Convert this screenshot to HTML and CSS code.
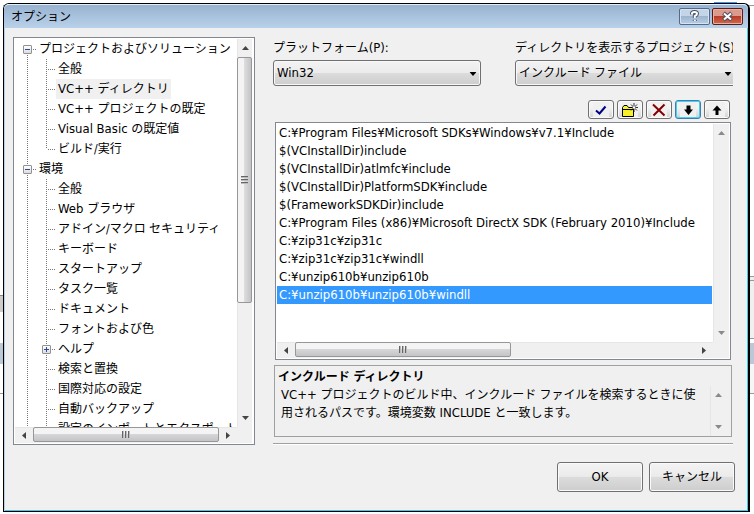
FILE: index.html
```html
<!DOCTYPE html>
<html lang="ja">
<head>
<meta charset="utf-8">
<title>オプション</title>
<link rel="stylesheet" href="styles.css">
</head>
<body>
<svg class="sprites" aria-hidden="true">
  <symbol id="up" viewBox="0 0 7 4"><path d="M0 4L3.5 0L7 4z"/></symbol>
  <symbol id="down" viewBox="0 0 7 4"><path d="M0 0L3.5 4L7 0z"/></symbol>
  <symbol id="left" viewBox="0 0 4 7"><path d="M4 0L0 3.5L4 7z"/></symbol>
  <symbol id="right" viewBox="0 0 4 7"><path d="M0 0L4 3.5L0 7z"/></symbol>
</svg>
<main class="dialog">
  <header class="titlebar">
    <h1>オプション</h1>
    <button class="caption" type="button" aria-label="ヘルプ"><svg width="13" height="13" viewBox="0 0 13 13"><path class="glyph-edge" d="M4 4.5V3.5Q4 2 6.5 2T9 3.8Q9 5 6.8 6.2V8M6.8 9.8V11"/><path class="glyph" d="M4 4.5V3.5Q4 2 6.5 2T9 3.8Q9 5 6.8 6.2V8M6.8 9.8V11"/></svg></button>
    <button class="caption close" type="button" aria-label="閉じる"><svg width="13" height="13" viewBox="0 0 13 13"><path class="glyph-edge" d="M2.5 3L10.5 10M10.5 3L2.5 10"/><path class="glyph" d="M3 3.5L10 9.5M10 3.5L3 9.5"/></svg></button>
  </header>

  <div class="content">
    <nav class="tree">
      <ul class="nodes">
        <li>
          <div class="row"><button class="toggle" type="button" aria-label="折りたたむ"></button><span class="label">プロジェクトおよびソリューション</span></div>
          <ul class="ended">
            <li class="row leaf"><span class="label">全般</span></li>
            <li class="row leaf"><span class="label current"><span lang="en">VC++ </span>ディレクトリ</span></li>
            <li class="row leaf"><span class="label"><span lang="en">VC++ </span>プロジェクトの既定</span></li>
            <li class="row leaf"><span class="label"><span lang="en">Visual Basic </span>の既定値</span></li>
            <li class="row leaf"><span class="label">ビルド/実行</span></li>
          </ul>
        </li>
        <li>
          <div class="row"><button class="toggle" type="button" aria-label="折りたたむ"></button><span class="label">環境</span></div>
          <ul>
            <li class="row leaf"><span class="label">全般</span></li>
            <li class="row leaf"><span class="label"><span lang="en">Web </span>ブラウザ</span></li>
            <li class="row leaf"><span class="label">アドイン/マクロ セキュリティ</span></li>
            <li class="row leaf"><span class="label">キーボード</span></li>
            <li class="row leaf"><span class="label">スタートアップ</span></li>
            <li class="row leaf"><span class="label">タスク一覧</span></li>
            <li class="row leaf"><span class="label">ドキュメント</span></li>
            <li class="row leaf"><span class="label">フォントおよび色</span></li>
            <li class="row"><button class="toggle plus" type="button" aria-label="展開する"></button><span class="label">ヘルプ</span></li>
            <li class="row leaf"><span class="label">検索と置換</span></li>
            <li class="row leaf"><span class="label">国際対応の設定</span></li>
            <li class="row leaf"><span class="label">自動バックアップ</span></li>
            <li class="row leaf"><span class="label">設定のインポートとエクスポート</span></li>
          </ul>
        </li>
      </ul>
      <div class="vbar" aria-hidden="true">
        <span class="arrow"><svg width="7" height="4"><use href="#up"/></svg></span>
        <span class="track"><span class="thumb tree-v"><i class="grip"></i></span></span>
        <span class="arrow"><svg width="7" height="4"><use href="#down"/></svg></span>
      </div>
      <div class="hbar" aria-hidden="true">
        <span class="arrow"><svg width="4" height="7"><use href="#left"/></svg></span>
        <span class="track"><span class="thumb full"><i class="grip"></i></span></span>
        <span class="arrow"><svg width="4" height="7"><use href="#right"/></svg></span>
      </div>
    </nav>

    <section class="page">
      <div class="fields">
        <div class="field platform">
          <label for="platform">プラットフォーム<span lang="en">(P):</span></label>
          <div class="combo"><select id="platform" lang="en"><option>Win32</option></select><svg width="8" height="4" viewBox="0 0 7 4"><use href="#down"/></svg></div>
        </div>
        <div class="field kind">
          <label for="kind">ディレクトリを表示するプロジェクト<span lang="en">(S):</span></label>
          <div class="combo"><select id="kind"><option>インクルード ファイル</option></select><svg width="8" height="4" viewBox="0 0 7 4"><use href="#down"/></svg></div>
        </div>
      </div>

      <div class="tools">
        <button class="tool" type="button" aria-label="確認"><svg width="16" height="14" viewBox="0 0 16 14"><path d="M3 7.5L6.5 10.5L12.5 3.5" fill="none" stroke="#000084" stroke-width="2"/></svg></button>
        <button class="tool" type="button" aria-label="新しい行"><svg width="16" height="14" viewBox="0 0 16 14"><path d="M.5 13.5V4.5L2 2.5H5L6.5 4.5H11.5V13.5z" fill="#f7ef29" stroke="#000"/><path d="M1 6.5H11" stroke="#000"/><path d="M12 0V9M7.5 4.5H16M9 1.5L15 7.5M15 1.5L9 7.5" stroke="#000" stroke-width=".8"/><circle cx="12" cy="4.5" r="1.3" fill="#fff"/></svg></button>
        <button class="tool" type="button" aria-label="削除"><svg width="16" height="14" viewBox="0 0 16 14"><path d="M2 1.5L13.5 12.5M13.5 1.5L2.5 12.5" stroke="#840000" stroke-width="2"/></svg></button>
        <button class="tool active" type="button" aria-label="下へ"><svg width="16" height="14" viewBox="0 0 16 14"><path d="M6.5 2.5H10.5V6.5H13L8.5 12L4 6.5H6.5z"/></svg></button>
        <button class="tool" type="button" aria-label="上へ"><svg width="16" height="14" viewBox="0 0 16 14"><path d="M6.5 12H9.5V7.5H12.5L8 2.5L3.5 7.5H6.5z"/></svg></button>
      </div>

      <div class="paths">
        <ul class="items" role="listbox" lang="en">
          <li role="option">C:¥Program Files¥Microsoft SDKs¥Windows¥v7.1¥Include</li>
          <li role="option">$(VCInstallDir)include</li>
          <li role="option">$(VCInstallDir)atlmfc¥include</li>
          <li role="option">$(VCInstallDir)PlatformSDK¥include</li>
          <li role="option">$(FrameworkSDKDir)include</li>
          <li role="option">C:¥Program Files (x86)¥Microsoft DirectX SDK (February 2010)¥Include</li>
          <li role="option">C:¥zip31c¥zip31c</li>
          <li role="option">C:¥zip31c¥zip31c¥windll</li>
          <li role="option">C:¥unzip610b¥unzip610b</li>
          <li role="option" aria-selected="true" class="selected">C:¥unzip610b¥unzip610b¥windll</li>
        </ul>
        <div class="vbar idle" aria-hidden="true">
          <span class="arrow"><svg width="7" height="4"><use href="#up"/></svg></span>
          <span class="track"></span>
          <span class="arrow"><svg width="7" height="4"><use href="#down"/></svg></span>
        </div>
        <div class="hbar" aria-hidden="true">
          <span class="arrow"><svg width="4" height="7"><use href="#left"/></svg></span>
          <span class="track"><span class="thumb paths-h"><i class="grip"></i></span></span>
          <span class="arrow"><svg width="4" height="7"><use href="#right"/></svg></span>
        </div>
      </div>

      <div class="info">
        <h2>インクルード ディレクトリ</h2>
        <div class="info-body">
          <p><span lang="en">VC++ </span>プロジェクトのビルド中、インクルード ファイルを検索するときに使用されるパスです。環境変数<span lang="en"> INCLUDE </span>と一致します。</p>
          <div class="vbar idle" aria-hidden="true">
            <span class="arrow"><svg width="7" height="4"><use href="#up"/></svg></span>
            <span class="track"></span>
            <span class="arrow"><svg width="7" height="4"><use href="#down"/></svg></span>
          </div>
        </div>
      </div>
      <hr>
    </section>
  </div>

  <footer class="actions">
    <button class="push" type="button" lang="en">OK</button>
    <button class="push" type="button">キャンセル</button>
  </footer>
</main>
</body>
</html>
```
FILE: styles.css
```css
* { box-sizing: border-box; }

body {
  margin: 0;
  height: 100vh;
  padding: 3px 4px 2px 3px;
  display: flex;
  background:
    linear-gradient(#fff 295px, #888 295px 296px, #ccc 296px 312px, #fff 312px 343px, #bac8d8 343px 364px, #fff 364px 393px, #999 393px 394px, #fff 394px) left / 3px 100% no-repeat,
    linear-gradient(#39f, #39f) right 17px top 2px / 23px 1px no-repeat,
    linear-gradient(#fff 5px, #999 5px 6px, #fff 6px 276px, #999 276px 277px, #eee 277px 280px, #999 280px 281px, #f0f0f0 281px 338px, #999 338px 339px, #fff 339px 343px, #bac8d8 343px 364px, #f6f6f6 364px 393px, #999 393px 394px, #fff 394px);
  color: #000;
  font: 12px/18px "DejaVu Sans Condensed", "Noto Sans CJK JP", sans-serif;
}

button, select { font: inherit; color: inherit; }
ul, h1, h2, p { margin: 0; padding: 0; list-style: none; font: inherit; }
.sprites { position: absolute; width: 0; height: 0; }

/* Latin runs are set one pixel larger beside the kana */
.dialog :lang(en) { font-size: 13px; }
span:lang(en) { line-height: 1; white-space: pre-wrap; }

.dialog {
  flex: 1;
  min-width: 0;
  display: flex;
  flex-direction: column;
  border: 1px solid #000;
  border-right-width: 2px;
  border-radius: 6px 6px 0 0;
  background: #f0f0f0;
  box-shadow: inset 1px 0 #b9d1ea, inset -1px 0 #3ccbee, inset 0 -1px #3ccbee;
}

/* Title bar */
.titlebar {
  height: 24px;
  padding: 0 5px 0 7px;
  display: flex;
  align-items: center;
  gap: 2px;
  border-top: 1px solid #e4eef8;
  border-radius: 5px 5px 0 0;
  background: linear-gradient(#98b3d0, #b9d1ea);
}
.titlebar h1 { flex: 1; }
.caption {
  width: 31px;
  height: 17px;
  padding: 0;
  display: grid;
  place-items: center;
  border: 1px solid #566a84;
  border-radius: 2px;
  background: linear-gradient(#c5d5e8 48%, #9eb5cf 50%, #b8cee6);
  box-shadow: inset 0 0 0 1px #d5e3f2;
}
.close {
  border-color: #5c1c14;
  background: linear-gradient(#dc9a8c 48%, #b83c28 50%, #cf6a4c);
  box-shadow: inset 0 0 0 1px #e6b0a4;
}
.glyph-edge, .glyph { fill: none; }
.glyph-edge { stroke: #4b5264; stroke-width: 4; }
.glyph { stroke: #fff; stroke-width: 2; }

/* Client area */
.content {
  flex: 1;
  min-height: 0;
  padding: 9px 15px 0 9px;
  display: flex;
  gap: 18px;
}

.tree, .paths {
  display: grid;
  grid-template-rows: minmax(0, 1fr) 16px;
  border: 1px solid #828790;
  background: #fff;
}
.tree {
  flex: none;
  width: 242px;
  grid-template-columns: minmax(0, 1fr) 15px;
  padding: 1px 2px 1px 1px;
}
.nodes {
  overflow: hidden;
  white-space: nowrap;
  background: repeating-linear-gradient(#777 0 1px, transparent 1px 2px) 12px 10px / 1px 100% no-repeat;
}
.nodes ul { background: repeating-linear-gradient(#777 0 1px, transparent 1px 2px) 31px 0 / 1px 100% no-repeat; }
.nodes .ended { background-size: 1px calc(100% - 10px); }
.row {
  height: 20px;
  padding-left: 8px;
  display: flex;
  align-items: center;
}
.nodes ul .row { padding-left: 27px; }
.row::before {
  content: "";
  order: 1;
  flex: none;
  width: 4px;
  height: 1px;
  margin-left: 1px;
  background: repeating-linear-gradient(90deg, #777 0 1px, transparent 1px 2px);
}
.leaf::before { width: 8px; margin-left: 6px; }
.label { order: 2; padding: 1px 2px; }
.current { background: #f0f0f0; }
.toggle {
  flex: none;
  width: 9px;
  height: 9px;
  padding: 0;
  border: 1px solid #919191;
  border-radius: 1px;
  background:
    linear-gradient(#2b4a9b, #2b4a9b) center / 5px 1px no-repeat,
    linear-gradient(#fff, #ddd);
}
.plus {
  background:
    linear-gradient(#2b4a9b, #2b4a9b) center / 5px 1px no-repeat,
    linear-gradient(#2b4a9b, #2b4a9b) center / 1px 5px no-repeat,
    linear-gradient(#fff, #ddd);
}

/* Scroll bars */
.vbar, .hbar { display: flex; background: #f0f0f0; }
.vbar { flex-direction: column; box-shadow: inset 1px 0 #e6e6e6; }
.hbar { box-shadow: inset 0 1px #e6e6e6; }
.arrow {
  flex: none;
  width: 16px;
  height: 18px;
  display: grid;
  place-items: center;
  fill: #444;
}
.hbar .arrow { height: 16px; width: 18px; }
.idle .arrow { fill: #8a8a8a; }
.track { flex: 1; min-height: 0; min-width: 0; }
.thumb {
  display: grid;
  place-items: center;
  border: 1px solid #979797;
  border-radius: 2px;
}
.vbar .thumb { background: linear-gradient(90deg, #f4f4f4 45%, #dcdcde 50%, #c4c4c8); }
.hbar .thumb { height: 15px; background: linear-gradient(#f4f4f4 45%, #d6d6d8 50%, #c4c4c8); }
.tree-v { height: 70%; }
.paths-h { width: 54%; }
.grip { width: 8px; height: 7px; background: repeating-linear-gradient(90deg, #666 0 1px, #bbb 1px 2px, transparent 2px 3px); }
.vbar .grip { width: 7px; height: 8px; background: repeating-linear-gradient(#666 0 1px, #bbb 1px 2px, transparent 2px 3px); }

/* Settings page */
.page { flex: 1; min-width: 0; display: flex; flex-direction: column; }
.fields { display: flex; gap: 34px; padding-top: 2px; }
.field { overflow: hidden; white-space: nowrap; }
.platform { flex: 208; }
.kind { flex: 218; min-width: 0; }
.field label { display: block; height: 21px; }
.field label span { white-space: nowrap; }
.combo { position: relative; }
.combo select {
  display: block;
  width: 100%;
  height: 26px;
  padding: 0 3px;
  appearance: none;
  border: 1px solid #707070;
  border-radius: 3px;
  background: linear-gradient(#f3f3f3, #ebebeb 50%, #dcdcdc 50%, #cdcdcd);
  box-shadow: inset 0 0 0 1px #f8f8f8;
}
.kind select { width: calc(100% + 4px); }
.combo svg { position: absolute; right: 4px; top: 12px; }
.kind .combo svg { right: 1px; }

.tools { display: flex; justify-content: flex-end; gap: 3px; padding: 14px 3px 3px 0; }
.tool {
  width: 26px;
  height: 19px;
  padding: 0;
  display: grid;
  place-items: center;
  border: 1px solid #707070;
  border-radius: 3px;
  background: linear-gradient(90deg, transparent 4px, #f0f0f0 4px calc(100% - 4px), transparent calc(100% - 4px)), linear-gradient(#f3f3f3 40%, #d2d2d2);
  box-shadow: inset 0 0 0 1px #fafafa;
}
.active { border-color: #3c7fb1; box-shadow: inset 0 0 0 1px #46d0f4; }

.paths {
  flex: 1;
  min-height: 0;
  grid-template-columns: minmax(0, 1fr) 16px;
  margin: 0 2px;
  padding: 1px;
}
.paths .hbar, .tree .hbar { grid-column: 1; }
.paths::after, .tree::after { content: ""; background: #f0f0f0; }
.items { overflow: hidden; white-space: nowrap; margin-right: 1px; }
.items li { height: 18px; padding: 0 2px; }
.selected { background: #3399ff; color: #fff; }

.info { margin: 5px 1px 6px; border: 1px solid #a0a0a0; padding: 2px 5px 0 3px; }
.info h2 { font-weight: bold; }
.info-body { display: flex; justify-content: space-between; }
.info p { flex: 1; min-width: 0; padding: 0 10px 0 3px; }
.info .vbar { width: 16px; height: 50px; }
hr { width: 100%; height: 2px; margin: 0; border: 0; border-top: 1px solid #a0a0a0; background: #fff; }

.actions {
  flex: none;
  display: flex;
  justify-content: flex-end;
  gap: 6px;
  padding: 17px 13px 19px 0;
}
.push {
  width: 86px;
  height: 30px;
  padding: 0;
  border: 1px solid #707070;
  border-radius: 3px;
  background: linear-gradient(#f3f3f3, #ebebeb 48%, #dcdcdc 50%, #cdcdcd);
  box-shadow: inset 0 0 0 1px #fafafa;
}
```
